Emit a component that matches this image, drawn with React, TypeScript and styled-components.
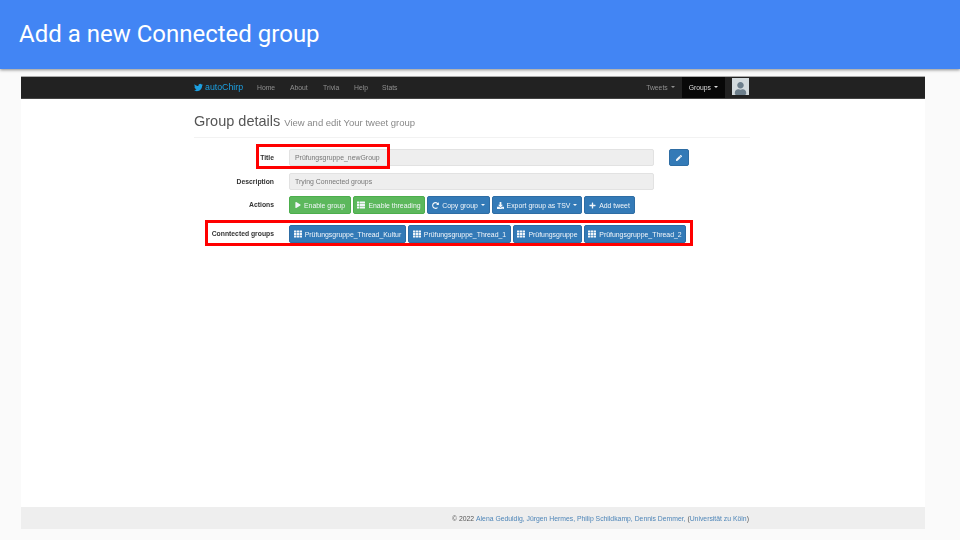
import React from 'react'
import styled, { createGlobalStyle } from 'styled-components'
import { FaTwitter, FaPlay, FaPlus, FaPen, FaDownload, FaRedoAlt, FaThList, FaTh, FaUser } from 'react-icons/fa'

const Global = createGlobalStyle`
    html, body {
        margin: 0;
        padding: 0;
        width: 960px;
        height: 540px;
        overflow: hidden;
    }
`

const Slide = styled.div`
    position: relative;
    width: 960px;
    height: 540px;
    background: #fafafa;
    display: flex;
    flex-direction: column;
    font-family: "Liberation Sans", Arial, sans-serif;
`

const Header = styled.div`
    height: 69px;
    flex: none;
    box-sizing: border-box;
    background: #4285f4;
    box-shadow: 0 1px 3px rgba(0, 0, 0, 0.45);
    padding: 0 0 2px 19px;
    display: flex;
    align-items: center;
    color: #fff;
    font-family: Roboto, sans-serif;
    font-size: 24px;
`

/* the reference is a scaled down screenshot, so its content is a little soft */
const Browser = styled.div`
    flex: 1;
    margin: 8px 35px 11px 21px;
    display: flex;
    flex-direction: column;
    background: #fff;
    min-height: 0;
    filter: blur(0.35px);
`

const Navbar = styled.div`
    height: 21px;
    flex: none;
    background: #222;
    border-top: 1px solid #aaa;
    border-bottom: 1px solid #444;
    display: flex;
    align-items: stretch;
    padding-left: 173px;
    margin-top: -1px;
    font-size: 6.8px;
`

const Brand = styled.div`
    display: flex;
    align-items: center;
    gap: 2px;
    padding-bottom: 1px;
    color: #1c9fe0;
    font-size: 8.8px;
    width: 63px;
`

const NavLink = styled.div<{ $width: number }>`
    display: flex;
    align-items: center;
    padding-bottom: 1px;
    width: ${p => p.$width}px;
    color: #8f8f8f;
`

const NavRight = styled.div`
    margin-left: auto;
    display: flex;
    align-items: stretch;
    padding-right: 176px;
`

const NavMenu = styled.div<{ $active?: boolean }>`
    display: flex;
    align-items: center;
    gap: 3px;
    padding: 0 7px 1px;
    color: ${p => (p.$active ? '#ddd' : '#8f8f8f')};
    background: ${p => (p.$active ? '#080808' : 'transparent')};
`

const Caret = styled.span`
    width: 0;
    height: 0;
    border-left: 2px solid transparent;
    border-right: 2px solid transparent;
    border-top: 2px solid currentColor;
`

const Avatar = styled.div`
    width: 17px;
    height: 17px;
    margin: 1px 0 0 7px;
    background: #d3dadd;
    color: #6d7f8c;
    display: flex;
    align-items: flex-end;
    justify-content: center;
    overflow: hidden;
    font-size: 13px;
`

const Main = styled.div`
    flex: 1;
    padding: 0 175px 0 173px;
`

const PageHead = styled.div`
    height: 39px;
    box-sizing: border-box;
    padding-top: 14px;
    border-bottom: 1px solid #f2f2f2;
    color: #555;
    font-size: 14.5px;
    white-space: nowrap;
`

const SubTitle = styled.small`
    margin-left: 4px;
    font-size: 9.5px;
    color: #888;
`

const Form = styled.div`
    display: grid;
    grid-template-columns: 80px 1fr;
    column-gap: 15px;
    margin-top: 11px;
`

const Label = styled.div<{ $top: number }>`
    grid-column: 1;
    height: 17px;
    margin-top: ${p => p.$top}px;
    display: flex;
    align-items: center;
    justify-content: flex-end;
    color: #333;
    font-size: 6.8px;
    font-weight: bold;
    white-space: nowrap;
`

const Row = styled.div<{ $top: number }>`
    grid-column: 2;
    height: 17px;
    margin-top: ${p => p.$top}px;
    display: flex;
    gap: 2px;
`

const Input = styled.div`
    width: 365px;
    height: 17px;
    box-sizing: border-box;
    padding-left: 5px;
    display: flex;
    align-items: center;
    background: #eee;
    border: 1px solid #e2e2e2;
    border-radius: 2px;
    color: #777;
    font-size: 6.9px;
`

const Button = styled.div<{ $green?: boolean; $width: number }>`
    width: ${p => p.$width}px;
    height: 18px;
    box-sizing: border-box;
    display: flex;
    align-items: center;
    justify-content: center;
    gap: 3px;
    border-radius: 2px;
    background: ${p => (p.$green ? '#5cb85c' : '#337ab7')};
    border: 1px solid ${p => (p.$green ? '#4cae4c' : '#2e6da4')};
    color: #f2f6fa;
    font-size: 6.9px;
    white-space: nowrap;
`

const EditButton = styled(Button)`
    margin-left: 13px;
    height: 17px;
`

const Footer = styled.div`
    height: 22px;
    flex: none;
    background: #eee;
    box-sizing: border-box;
    padding-left: 431px;
    display: flex;
    align-items: center;
    color: #555;
    font-size: 6.83px;
    white-space: pre;
`

const FooterLink = styled.span`
    color: #4f86b8;
`

const Highlight = styled.div`
    position: absolute;
    box-sizing: border-box;
    border: 3px solid #f00;
`

const TitleHighlight = styled(Highlight)`
    left: 256px;
    top: 144px;
    width: 134px;
    height: 25px;
`

const GroupsHighlight = styled(Highlight)`
    left: 205px;
    top: 220px;
    width: 488px;
    height: 26px;
`

const connected = [
    { name: 'Prüfungsgruppe_Thread_Kultur', width: 117 },
    { name: 'Prüfungsgruppe_Thread_1', width: 103 },
    { name: 'Prüfungsgruppe', width: 69 },
    { name: 'Prüfungsgruppe_Thread_2', width: 102 },
]

const App: React.FC = () => {
    return <Slide>
        <Global />
        <Header>Add a new Connected group</Header>
        <Browser>
            <Navbar>
                <Brand><FaTwitter size={9} />autoChirp</Brand>
                <NavLink $width={33}>Home</NavLink>
                <NavLink $width={33}>About</NavLink>
                <NavLink $width={31}>Trivia</NavLink>
                <NavLink $width={28}>Help</NavLink>
                <NavLink $width={28}>Stats</NavLink>
                <NavRight>
                    <NavMenu>Tweets <Caret /></NavMenu>
                    <NavMenu $active>Groups <Caret /></NavMenu>
                    <Avatar><FaUser /></Avatar>
                </NavRight>
            </Navbar>
            <Main>
                <PageHead>Group details<SubTitle>View and edit Your tweet group</SubTitle></PageHead>
                <Form>
                    <Label $top={0}>Title</Label>
                    <Row $top={0}>
                        <Input>Prüfungsgruppe_newGroup</Input>
                        <EditButton $width={20}><FaPen size={6} /></EditButton>
                    </Row>
                    <Label $top={7}>Description</Label>
                    <Row $top={7}>
                        <Input>Trying Connected groups</Input>
                    </Row>
                    <Label $top={6}>Actions</Label>
                    <Row $top={6}>
                        <Button $green $width={62}><FaPlay size={6} />Enable group</Button>
                        <Button $green $width={72}><FaThList size={8} />Enable threading</Button>
                        <Button $width={63}><FaRedoAlt size={7} />Copy group <Caret /></Button>
                        <Button $width={90}><FaDownload size={7} />Export group as TSV <Caret /></Button>
                        <Button $width={51}><FaPlus size={7} />Add tweet</Button>
                    </Row>
                    <Label $top={12}>Conntected groups</Label>
                    <Row $top={12}>
                        {connected.map(group =>
                            <Button key={group.name} $width={group.width}><FaTh size={8} />{group.name}</Button>
                        )}
                    </Row>
                </Form>
            </Main>
            <Footer>
                © 2022 <FooterLink>Alena Geduldig, Jürgen Hermes, Philip Schildkamp, Dennis Demmer,</FooterLink> (<FooterLink>Universität zu Köln</FooterLink>)
            </Footer>
        </Browser>
        <TitleHighlight />
        <GroupsHighlight />
    </Slide>
}

export default App
